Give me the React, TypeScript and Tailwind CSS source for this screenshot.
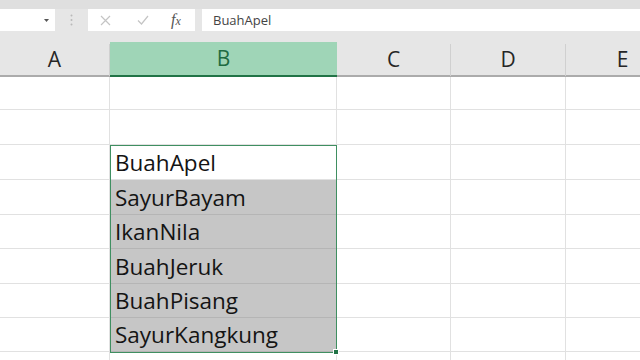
import React from "react";

const cols = [
  { name: "A", w: "w-[110px]" },
  { name: "B", w: "w-[227px]" },
  { name: "C", w: "w-[114px]" },
  { name: "D", w: "w-[115px]" },
  { name: "E", w: "w-[114px]" },
];

const items = [
  "",
  "",
  "BuahApel",
  "SayurBayam",
  "IkanNila",
  "BuahJeruk",
  "BuahPisang",
  "SayurKangkung",
  "",
];

const heights = [
  "h-[33px]",
  "h-[35px]",
  "h-[35px]",
  "h-[35px]",
  "h-[34px]",
  "h-[35px]",
  "h-[34px]",
  "h-[34px]",
  "h-[34px]",
];

function FormulaBar() {
  return (
    <div className="h-[42px] bg-[#e6e6e6] flex flex-col">
      <div className="h-[9px] bg-[#dfdfdf]" />
      <div className="flex items-start h-[22px]">
        <div className="w-[55px] h-[22px] bg-white flex items-center justify-end pr-[6px]">
          <svg width="5" height="3" viewBox="0 0 5 3">
            <path d="M0 0 L5 0 L2.5 3 Z" fill="#555" />
          </svg>
        </div>
        <div className="w-[33px] h-[22px] flex items-center justify-center">
          <svg width="3" height="12" viewBox="0 0 3 12">
            <circle cx="1.5" cy="1.5" r="1" fill="#b9b9b9" />
            <circle cx="1.5" cy="6" r="1" fill="#b9b9b9" />
            <circle cx="1.5" cy="10.5" r="1" fill="#b9b9b9" />
          </svg>
        </div>
        <div className="w-[107px] h-[22px] bg-white flex items-center">
          <svg className="ml-[12px]" width="11" height="11" viewBox="0 0 11 11">
            <path d="M1 1 L10 10 M10 1 L1 10" stroke="#c4c4c4" strokeWidth="1.2" fill="none" />
          </svg>
          <svg className="ml-[26px]" width="12" height="10" viewBox="0 0 12 10">
            <path d="M1 5.5 L4.5 9 L11 1" stroke="#c4c4c4" strokeWidth="1.2" fill="none" />
          </svg>
          <span className="ml-[22px] text-[16px] italic text-[#555] font-['Liberation_Serif',serif] leading-none">
            f<span className="text-[12px]">x</span>
          </span>
        </div>
        <div className="w-[7px]" />
        <div className="flex-1 h-[22px] bg-white flex items-center pl-[11px]">
          <span className="text-[13px] text-[#444] font-['Open_Sans',sans-serif] leading-none">
            BuahApel
          </span>
        </div>
      </div>
    </div>
  );
}

function HeaderRow() {
  return (
    <div className="flex h-[35px] bg-[#e6e6e6]">
      {cols.map((c) =>
        c.name === "B" ? (
          <div
            key={c.name}
            className={`${c.w} shrink-0 bg-[#9fd5b7] border-b-2 border-[#217346] flex items-center justify-center text-[21px] text-[#1e6b42] font-['Open_Sans',sans-serif]`}
          >
            {c.name}
          </div>
        ) : (
          <div
            key={c.name}
            className={`${c.w} shrink-0 border-b-2 border-[#ababab] flex flex-col`}
          >
            <div className="flex-1 flex items-center justify-center text-[21px] text-[#262626] font-['Open_Sans',sans-serif] border-r border-[#d0d0d0] mt-[2px]">
              {c.name}
            </div>
          </div>
        )
      )}
    </div>
  );
}

function Grid() {
  return (
    <div className="relative">
      {items.map((text, r) => (
        <div key={r} className={`flex ${heights[r]}`}>
          {cols.map((c) => {
            const isB = c.name === "B";
            const selected = isB && r >= 3 && r <= 7;
            return (
              <div
                key={c.name}
                className={`${c.w} shrink-0 border-b border-r border-[#e1e1e1] ${
                  selected ? "bg-[#c6c6c6] border-b-[#b5b5b5]" : "bg-white"
                } flex items-end pl-[5px] pb-[1px]`}
              >
                {isB && text ? (
                  <span className="text-[22.5px] leading-[30px] text-[#141414] font-['Open_Sans',sans-serif] whitespace-nowrap">
                    {text}
                  </span>
                ) : null}
              </div>
            );
          })}
        </div>
      ))}
      <div className="absolute left-[110px] top-[68px] w-[227px] h-[208px] border border-[#3f8f61] pointer-events-none" />
      <div className="absolute left-[333px] top-[272px] w-[6px] h-[6px] bg-[#217346] border border-white pointer-events-none" />
    </div>
  );
}

export default function App() {
  return (
    <div className="w-[640px] h-[360px] overflow-hidden bg-white">
      <FormulaBar />
      <HeaderRow />
      <Grid />
    </div>
  );
}
